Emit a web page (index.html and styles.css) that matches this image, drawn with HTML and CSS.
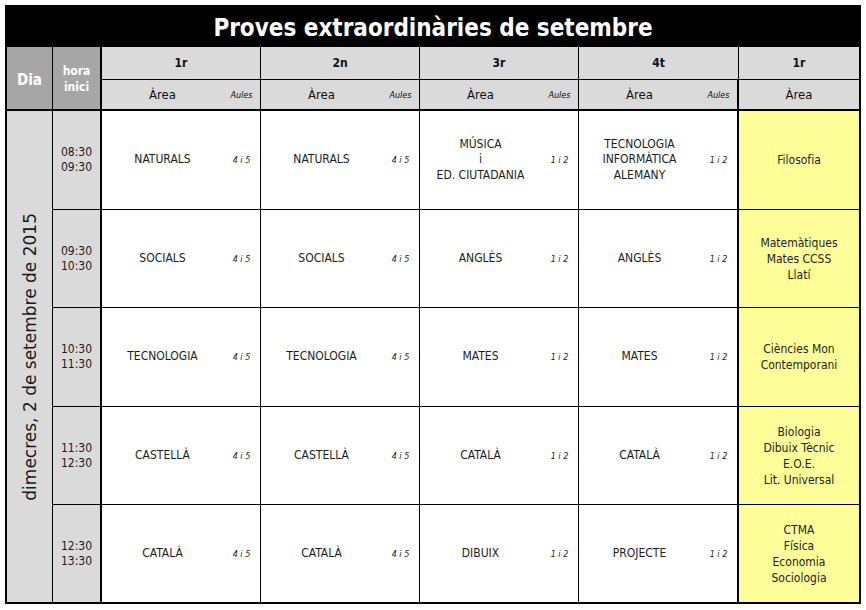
FILE: index.html
```html
<!DOCTYPE html>
<html lang="ca">
<head>
<meta charset="utf-8">
<title>Proves extraordinàries de setembre</title>
<link rel="stylesheet" href="styles.css">
</head>
<body>
<div class="sheet">
  <div class="title">Proves extraordinàries de setembre</div>

  <div class="hd-dark dia-h">Dia</div>
  <div class="hd-dark hora-h">hora<br>inici</div>
  <div class="hd course">1r</div>
  <div class="hd course">2n</div>
  <div class="hd course">3r</div>
  <div class="hd course">4t</div>
  <div class="hd course last">1r</div>

  <div class="hd area">Àrea</div><div class="hd aul">Aules</div>
  <div class="hd area">Àrea</div><div class="hd aul">Aules</div>
  <div class="hd area">Àrea</div><div class="hd aul">Aules</div>
  <div class="hd area">Àrea</div><div class="hd aul sep">Aules</div>
  <div class="hd area last">Àrea</div>

  <div class="day"><span>dimecres, 2 de setembre de 2015</span></div>

  <!-- row 1 -->
  <div class="time r">08:30<br>09:30</div>
  <div class="c r">NATURALS</div><div class="a r">4 i 5</div>
  <div class="c r">NATURALS</div><div class="a r">4 i 5</div>
  <div class="c r">MÚSICA<br>i<br>ED. CIUTADANIA</div><div class="a r">1 i 2</div>
  <div class="c r">TECNOLOGIA<br>INFORMÀTICA<br>ALEMANY</div><div class="a r sep">1 i 2</div>
  <div class="y r">Filosofia</div>

  <!-- row 2 -->
  <div class="time">09:30<br>10:30</div>
  <div class="c">SOCIALS</div><div class="a">4 i 5</div>
  <div class="c">SOCIALS</div><div class="a">4 i 5</div>
  <div class="c">ANGLÈS</div><div class="a">1 i 2</div>
  <div class="c">ANGLÈS</div><div class="a sep">1 i 2</div>
  <div class="y">Matemàtiques<br>Mates CCSS<br>Llatí</div>

  <!-- row 3 -->
  <div class="time">10:30<br>11:30</div>
  <div class="c">TECNOLOGIA</div><div class="a">4 i 5</div>
  <div class="c">TECNOLOGIA</div><div class="a">4 i 5</div>
  <div class="c">MATES</div><div class="a">1 i 2</div>
  <div class="c">MATES</div><div class="a sep">1 i 2</div>
  <div class="y">Ciències Mon<br>Contemporani</div>

  <!-- row 4 -->
  <div class="time">11:30<br>12:30</div>
  <div class="c">CASTELLÀ</div><div class="a">4 i 5</div>
  <div class="c">CASTELLÀ</div><div class="a">4 i 5</div>
  <div class="c">CATALÀ</div><div class="a">1 i 2</div>
  <div class="c">CATALÀ</div><div class="a sep">1 i 2</div>
  <div class="y">Biologia<br>Dibuix Tècnic<br>E.O.E.<br>Lit. Universal</div>

  <!-- row 5 -->
  <div class="time end">12:30<br>13:30</div>
  <div class="c end">CATALÀ</div><div class="a end">4 i 5</div>
  <div class="c end">CATALÀ</div><div class="a end">4 i 5</div>
  <div class="c end">DIBUIX</div><div class="a end">1 i 2</div>
  <div class="c end">PROJECTE</div><div class="a end sep">1 i 2</div>
  <div class="y end">CTMA<br>Física<br>Economia<br>Sociologia</div>
</div>
</body>
</html>
```

FILE: styles.css
```css
html, body {
  margin: 0;
  padding: 0;
  background: #ffffff;
}
body {
  padding: 5px;
  font-family: "DejaVu Sans Condensed", "DejaVu Sans", sans-serif;
  color: #1c1c1c;
}
.sheet {
  width: 852px;
  border: 2px solid #000;
  display: grid;
  grid-template-columns: 46px 49px 121px 38px 121px 38px 121px 38px 121px 39px 120px;
  grid-template-rows: 40px 33px 31px 99px 98px 99px 98px 97px;
}
.sheet > div {
  box-sizing: border-box;
  display: flex;
  align-items: center;
  justify-content: center;
  text-align: center;
}
.title {
  grid-column: 1 / -1;
  background: #000;
  color: #fff;
  font-weight: bold;
  font-size: 24px;
  padding-top: 1px;
}
.hd-dark {
  grid-row: 2 / 4;
  background: #a6a6a6;
  color: #fff;
  font-weight: bold;
  border-bottom: 2px solid #000;
}
.dia-h {
  font-size: 15px;
  padding-top: 3px;
  border-right: 1px solid #000;
}
.hora-h {
  font-size: 12px;
  line-height: 16px;
  padding-top: 2px;
  border-right: 2px solid #000;
}
.hd {
  background: #dadada;
  color: #111;
}
.course {
  grid-column: span 2;
  font-weight: bold;
  font-size: 12px;
  border-right: 1px solid #000;
  border-bottom: 1px solid #000;
}
.course.last {
  grid-column: span 1;
  border-right: 0;
}
.area {
  font-size: 13px;
  border-bottom: 2px solid #000;
}
.area.last {
  border-right: 0;
}
.aul {
  font-size: 9px;
  font-style: italic;
  border-right: 1px solid #000;
  border-bottom: 2px solid #000;
}
.sheet > .sep {
  border-right: 2px solid #000;
}
.day {
  grid-row: 4 / 9;
  grid-column: 1;
  background: #dadada;
  border-right: 1px solid #000;
}
.day span {
  writing-mode: vertical-rl;
  transform: rotate(180deg);
  font-size: 17px;
  color: #1a1a1a;
  font-family: "DejaVu Sans", sans-serif;
}
.time {
  background: #dadada;
  font-size: 12px;
  line-height: 15px;
  border-right: 2px solid #000;
  border-bottom: 1px solid #000;
}
.c {
  font-size: 12px;
  line-height: 15.5px;
  background: #fff;
  border-bottom: 1px solid #000;
}
.a {
  font-size: 9px;
  font-style: italic;
  background: #fff;
  border-right: 1px solid #000;
  border-bottom: 1px solid #000;
}
.y {
  background: #ffff99;
  font-size: 12px;
  line-height: 16px;
  border-bottom: 1px solid #000;
}
.sheet > .end {
  border-bottom: 0;
}
```
